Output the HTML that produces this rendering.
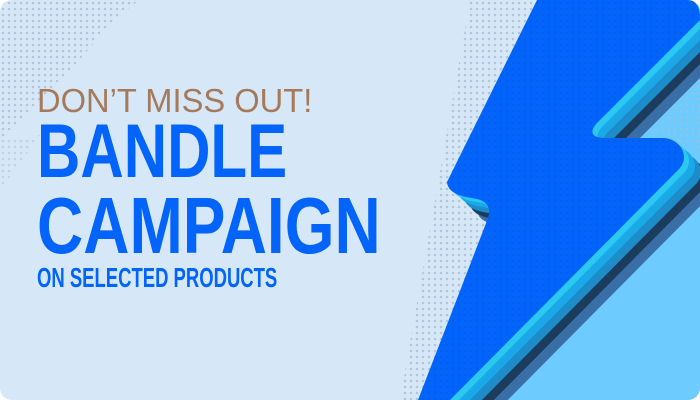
<!DOCTYPE html>
<html><head><style>
html,body{margin:0;padding:0;background:#fff;width:700px;height:400px;overflow:hidden;}
.card{position:relative;width:700px;height:400px;border-radius:12px;overflow:hidden;background:#d6e8f7;font-family:"Liberation Sans",sans-serif;}
svg{position:absolute;left:0;top:0;display:block;overflow:hidden;}
.t{position:absolute;left:37px;white-space:nowrap;transform-origin:0 0;}
</style></head><body>
<div class="card">
<svg width="700" height="400" viewBox="0 0 700 400">
<defs>
<clipPath id="cp"><rect x="0" y="0" width="700" height="400"/></clipPath>
<pattern id="dots" width="6" height="6" patternUnits="userSpaceOnUse"><circle cx="3" cy="3" r="1.3" fill="#a9bcd6"/></pattern>
<pattern id="dd" width="6" height="6" patternUnits="userSpaceOnUse"><circle cx="3" cy="3" r="1.2" fill="#0050d8" opacity="0.6"/></pattern>
<path id="bolt" d="M537 0 H688 C698 0 700 10 700 20 L598 122 C588 132 592 138 605 138 H665 C680 140 690 155 680 168 L450 400 H418 L488 218 C492 205 485 200 472 198 C458 196 448 192 447 182 Z"/>
</defs>
<g clip-path="url(#cp)">
<path d="M0 0 H140 C110 20 90 50 70 70 L0 140 Z" fill="url(#dots)" opacity="0.8"/>
<path d="M0 140 L40 135 L0 190 Z" fill="url(#dots)" opacity="0.5"/>
<path d="M470 0 H540 L450 180 L490 215 L420 400 H400 Z" fill="url(#dots)" opacity="0.8"/>
<path d="M700 0 V400 H430 L600 130 Z" fill="#6ecbfd"/>
<path d="M700 60 L640 125 L700 150 Z" fill="url(#dots)" opacity="0.5"/>
<use href="#bolt" transform="translate(30,28)" fill="#3a6ea6"/>
<use href="#bolt" transform="translate(23,21)" fill="#1b3c5c"/>
<use href="#bolt" transform="translate(17,15)" fill="#1e8cc8"/>
<use href="#bolt" transform="translate(11,9)" fill="#1aa8e8"/>
<use href="#bolt" transform="translate(5,4)" fill="#2bc8f2"/>
<use href="#bolt" fill="#0264fa"/>
<use href="#bolt" fill="url(#dd)" opacity="0.5"/>
</g>
</svg>
<div class="t" style="top:84px;font-size:33px;line-height:33px;color:#a57a5c;transform:scaleX(0.99);">DON’T MISS OUT!</div>
<div class="t" style="top:114px;font-size:76px;line-height:76px;color:#0264fa;font-weight:bold;transform:scaleX(0.79);">BANDLE</div>
<div class="t" style="top:186px;font-size:80px;line-height:80px;color:#0264fa;font-weight:bold;transform:scaleX(0.80);">CAMPAIGN</div>
<div class="t" style="top:264px;font-size:28px;line-height:28px;color:#0264fa;font-weight:bold;transform:scaleX(0.66);">ON SELECTED PRODUCTS</div>
</div>
</body></html>
